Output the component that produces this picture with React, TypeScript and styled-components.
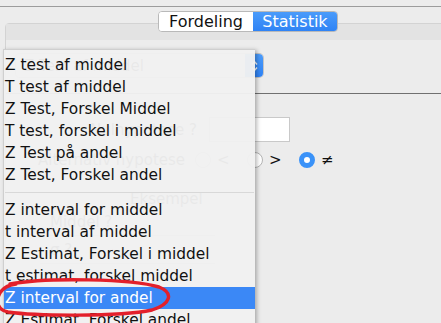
import styled, { createGlobalStyle } from "styled-components";

const GlobalStyle = createGlobalStyle`
  html, body {
    margin: 0;
    padding: 0;
    background: #ececec;
    font-family: "DejaVu Sans", "Liberation Sans", sans-serif;
  }
`;

const menuGroups = [
  [
    "Z test af middel",
    "T test af middel",
    "Z Test, Forskel Middel",
    "T test, forskel i middel",
    "Z Test på andel",
    "Z Test, Forskel andel",
  ],
  [
    "Z interval for middel",
    "t interval af middel",
    "Z Estimat, Forskel i middel",
    "t estimat, forskel middel",
    "Z interval for andel",
    "Z Estimat, Forskel andel",
  ],
];

const selectedItem = "Z interval for andel";

const alternatives = ["<", ">", "≠"];

export default function App() {
  return (
    <>
      <GlobalStyle />
      <Window>
        <TitleStrip />
        <TabRow>
          <Segmented>
            <Segment>Fordeling</Segment>
            <Segment active>Statistik</Segment>
          </Segmented>
        </TabRow>
        <Panel>
          <PanelHeader />
          <PanelBody>
            <Popup>
              <PopupText>Z Test af middel</PopupText>
              <PopupArrows>
                <svg width="7" height="12" viewBox="0 0 7 12">
                  <path d="M1 4.5 L3.5 1.5 L6 4.5 M1 7.5 L3.5 10.5 L6 7.5" fill="none" stroke="#fff" strokeWidth="1.4" />
                </svg>
              </PopupArrows>
            </Popup>
            <Divider />
            <FieldRow>
              <FieldLabel>Nulhypotese ?</FieldLabel>
              <TextField />
            </FieldRow>
            <RadioRow>
              <FieldLabel>Alternativ hypotese</FieldLabel>
              {alternatives.map((a) => (
                <RadioOption key={a}>
                  <Radio checked={a === "≠"} />
                  <RadioText>{a}</RadioText>
                </RadioOption>
              ))}
            </RadioRow>
            <GroupTitle>Eksempel</GroupTitle>
            <ExampleLine>Middel ?</ExampleLine>
            <ExampleLine>σ ?</ExampleLine>
          </PanelBody>
        </Panel>

        <Menu>
          {menuGroups.map((group, gi) => (
            <MenuGroup key={gi}>
              {gi > 0 && <MenuSeparator />}
              {group.map((item) => (
                <MenuItem key={item} selected={item === selectedItem}>
                  {item}
                </MenuItem>
              ))}
            </MenuGroup>
          ))}
        </Menu>

        <Annotation width="176" height="38" viewBox="0 0 176 38">
          <path
            d="M14 5 C52 -2 136 0 163 8 C178 14 175 25 156 31 C122 38 40 37 12 33 C2 31 -1 23 4 14 C7 9 12 6 20 5"
            fill="none"
            stroke="#e3202b"
            strokeWidth="3.4"
            strokeLinecap="round"
          />
        </Annotation>
      </Window>
    </>
  );
}

const Window = styled.div`
  position: relative;
  width: 441px;
  height: 323px;
  overflow: hidden;
  background: #ececec;
`;

const TitleStrip = styled.div`
  height: 6px;
  border-bottom: 1px solid #9c9c9c;
`;

const TabRow = styled.div`
  position: relative;
  z-index: 1;
  margin-top: 4px;
  padding-left: 158px;
`;

const Segmented = styled.div`
  display: inline-flex;
  height: 21px;
  border: 1px solid #b9b9b9;
  border-radius: 4px;
  overflow: hidden;
  box-sizing: border-box;
  background: #fff;
`;

const Segment = styled.div<{ active?: boolean }>`
  display: flex;
  align-items: center;
  justify-content: center;
  width: ${(p) => (p.active ? "84px" : "94px")};
  font-size: 16px;
  color: ${(p) => (p.active ? "#fff" : "#111")};
  background: ${(p) => (p.active ? "linear-gradient(#4a9bfa, #2f83f5)" : "#fff")};
`;

const Panel = styled.div`
  margin-top: -9px;
  margin-left: 5px;
  width: 470px;
  height: 320px;
  border: 1px solid #d3d3d3;
  border-radius: 4px;
  background: #ececec;
`;

const PanelHeader = styled.div`
  height: 16px;
  background: #e3e3e3;
`;

const PanelBody = styled.div`
  padding-top: 14px;
`;

const Popup = styled.div`
  display: flex;
  align-items: center;
  margin-left: 10px;
  width: 247px;
  height: 23px;
  border-radius: 4px;
  background: #fff;
  box-shadow: 0 0 0 1px #c4c4c4;
`;

const PopupText = styled.span`
  flex: 1;
  padding-left: 8px;
  font-size: 15px;
  color: #111;
`;

const PopupArrows = styled.span`
  display: flex;
  align-items: center;
  justify-content: center;
  width: 18px;
  height: 23px;
  border-radius: 0 4px 4px 0;
  background: linear-gradient(#4c9cfa, #2e82f5);
`;

const Divider = styled.div`
  margin-top: 16px;
  height: 1px;
  background: #707070;
`;

const FieldRow = styled.div`
  display: flex;
  align-items: center;
  margin-top: 23px;
  padding-left: 84px;
  gap: 12px;
`;

const FieldLabel = styled.span`
  font-size: 15px;
  color: #111;
`;

const TextField = styled.div`
  width: 81px;
  height: 25px;
  box-sizing: border-box;
  background: #fff;
  border: 1px solid #c9c9c9;
`;

const RadioRow = styled.div`
  display: flex;
  align-items: center;
  margin-top: 10px;
  padding-left: 32px;
  height: 16px;
  gap: 10px;
`;

const RadioOption = styled.span`
  display: flex;
  align-items: center;
  gap: 6px;
  width: 42px;
`;

const Radio = styled.span<{ checked?: boolean }>`
  display: inline-block;
  box-sizing: border-box;
  width: 16px;
  height: 16px;
  border-radius: 50%;
  background: ${(p) => (p.checked ? "#fff" : "#fff")};
  border: ${(p) => (p.checked ? "5px solid #3a92f8" : "1px solid #b4b4b4")};
`;

const RadioText = styled.span`
  font-size: 15px;
  color: #111;
`;

const GroupTitle = styled.div`
  margin-top: 22px;
  padding-left: 124px;
  font-size: 15px;
  color: #111;
`;

const ExampleLine = styled.div`
  margin-left: 34px;
  width: 165px;
  padding: 5px 0 4px 10px;
  border-bottom: 1px solid #bbb;
  font-size: 15px;
  color: #111;
`;

const Menu = styled.div`
  position: absolute;
  left: 3px;
  top: 49px;
  width: 252px;
  padding: 4px 0;
  background: rgba(241, 241, 241, 0.965);
  border: 1px solid #cfcfcf;
  border-right: none;
  box-shadow: 2px 1px 4px rgba(0, 0, 0, 0.28);
  box-sizing: border-box;
`;

const MenuGroup = styled.div``;

const MenuSeparator = styled.div`
  margin: 6px 1px;
  height: 1px;
  background: #d8d8d8;
`;

const MenuItem = styled.div<{ selected?: boolean }>`
  height: 22px;
  line-height: 22px;
  padding-left: 1px;
  font-size: 15.4px;
  white-space: nowrap;
  color: ${(p) => (p.selected ? "#fff" : "#111")};
  background: ${(p) => (p.selected ? "#3b88f6" : "transparent")};
`;

const Annotation = styled.svg`
  position: absolute;
  left: -4px;
  top: 279px;
  overflow: visible;
`;
